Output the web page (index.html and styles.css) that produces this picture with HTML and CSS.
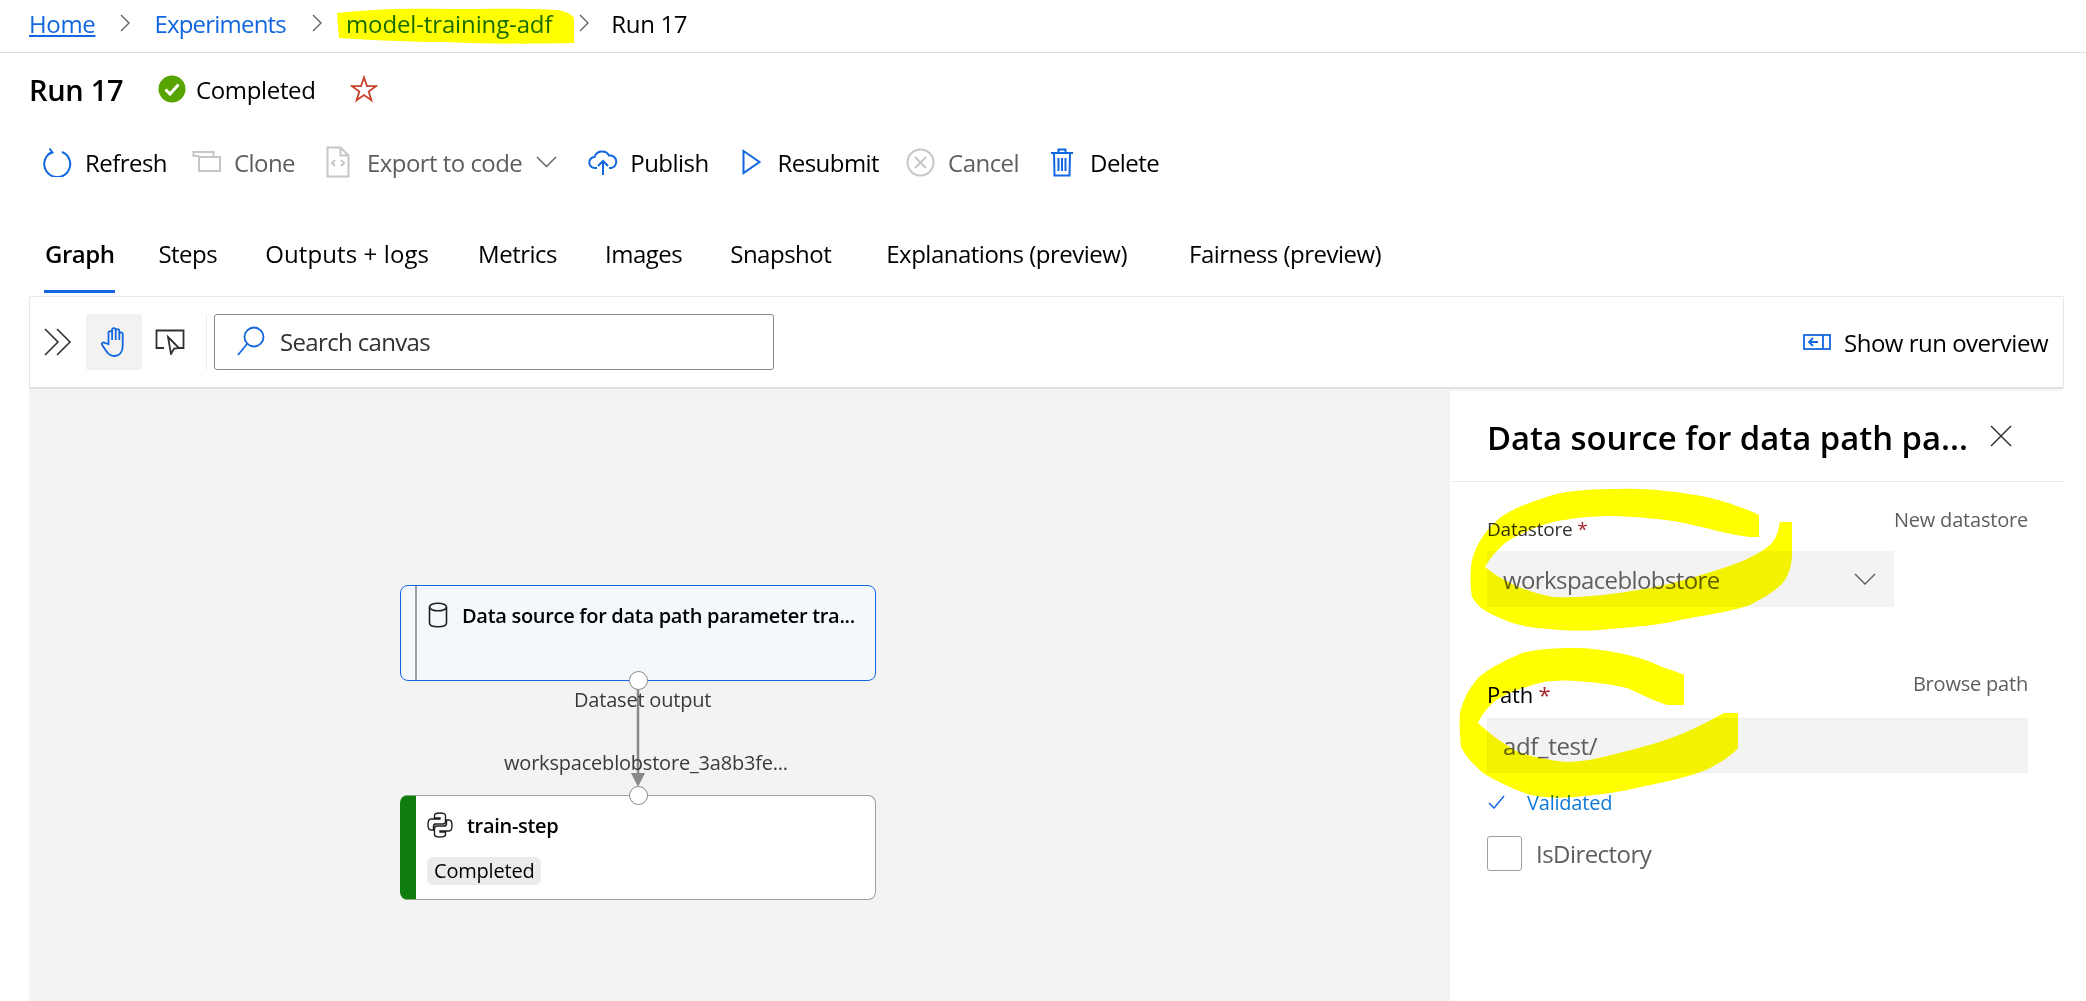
FILE: index.html
```html
<!DOCTYPE html>
<html>
<head>
  <title>Run 17 - Experiments</title>
  <meta http-equiv="Content-Type" content="text/html; charset=utf-8" />
  <link rel="stylesheet" href="styles.css">
</head>
<body>
  <nav class="breadcrumb">
    <a href="#" class="crumb-home">Home</a>
    <svg class="crumb-sep" width="12" height="20" viewBox="0 0 12 20"><path d="M2 2l8 8-8 8"/></svg>
    <a href="#" class="crumb-link">Experiments</a>
    <svg class="crumb-sep" width="12" height="20" viewBox="0 0 12 20"><path d="M2 2l8 8-8 8"/></svg>
    <a href="#" class="crumb-link crumb-model">model-training-adf</a>
    <svg class="crumb-sep" width="12" height="20" viewBox="0 0 12 20"><path d="M2 2l8 8-8 8"/></svg>
    <span class="crumb-current">Run 17</span>
  </nav>

  <header class="run-header">
    <h1 class="run-title">Run 17</h1>
    <svg class="status-icon" width="28" height="28" viewBox="0 0 28 28">
      <circle cx="14" cy="14" r="13.5" fill="#57a300"/>
      <path d="M7.5 14.5l4.5 4.5 8.5-9.5" fill="none" stroke="#fff" stroke-width="3"/>
    </svg>
    <span class="status-text">Completed</span>
    <svg class="star-icon" width="28" height="28" viewBox="0 0 28 28">
      <path d="M14 2.5l3 8.6h8.900l-7.200 5.400 2.700 8.800-7.400-5.300-7.400 5.300 2.700-8.800-7.200-5.400h8.900z" fill="none" stroke="#c8402a" stroke-width="1.800"/>
    </svg>
  </header>

  <div class="command-bar">
    <button class="cmd cmd-refresh">
      <svg width="30" height="30" viewBox="0 0 30 30" class="icon-blue"><path d="M10 5.200A13 13 0 1 0 20 5"/><path d="M7.500 1.500l3 4-4.500 1.800"/></svg>
      Refresh
    </button>
    <button class="cmd cmd-clone is-disabled">
      <svg width="30" height="22" viewBox="0 0 30 22" class="icon-gray"><path d="M7 5H1.500V1h20v5"/><rect x="7" y="6" width="21" height="14"/></svg>
      Clone
    </button>
    <button class="cmd cmd-export is-disabled">
      <svg width="24" height="32" viewBox="0 0 24 32" class="icon-gray"><path d="M1.500 1.500h13l8 8v21h-21z"/><path d="M14.500 1.500v8h8"/><path d="M9 14l-3 3 3 3M15 14l3 3-3 3" stroke-width="1.300"/></svg>
      Export to code
      <svg class="cmd-chevron" width="21" height="12" viewBox="0 0 21 12"><path d="M1 1l9.500 9.500L20 1"/></svg>
    </button>
    <button class="cmd cmd-publish">
      <svg width="30" height="28" viewBox="0 0 30 28" class="icon-blue"><path d="M9 20H7a5.500 5.500 0 0 1-.5-11A8 8 0 0 1 21 7.500 6.300 6.300 0 0 1 23 20h-2"/><path d="M15 27V13M10 18l5-5 5 5"/></svg>
      Publish
    </button>
    <button class="cmd cmd-resubmit">
      <svg width="20" height="26" viewBox="0 0 20 26" class="icon-blue"><path d="M1.500 2l16 11-16 11z"/></svg>
      Resubmit
    </button>
    <button class="cmd cmd-cancel is-disabled">
      <svg width="29" height="29" viewBox="0 0 29 29" class="icon-gray"><circle cx="14.500" cy="14.500" r="13"/><path d="M9 9l11 11M20 9L9 20"/></svg>
      Cancel
    </button>
    <button class="cmd cmd-delete">
      <svg width="22" height="29" viewBox="0 0 22 29" class="icon-blue"><path d="M0 5h22M3 5l.5 22.500h15L19 5M7.500 5V1.500h7V5M7.500 10v13M11 10v13M14.500 10v13"/></svg>
      Delete
    </button>
  </div>

  <div class="tabs">
    <a href="#" class="tab tab-active">Graph</a>
    <a href="#" class="tab tab-steps">Steps</a>
    <a href="#" class="tab tab-outputs">Outputs + logs</a>
    <a href="#" class="tab tab-metrics">Metrics</a>
    <a href="#" class="tab tab-images">Images</a>
    <a href="#" class="tab tab-snapshot">Snapshot</a>
    <a href="#" class="tab tab-explain">Explanations (preview)</a>
    <a href="#" class="tab tab-fairness">Fairness (preview)</a>
  </div>

  <section class="graph-toolbar">
    <svg class="expand-icon" width="28" height="28" viewBox="0 0 28 28"><path d="M1 1l13 13L1 27M13 1l13 13-13 13"/></svg>
    <div class="tool-btn tool-active">
      <svg width="26" height="30" viewBox="0 0 26 30" class="icon-blue thin"><path d="M7.500 17V6a1.800 1.800 0 0 1 3.600 0v7-10a1.800 1.800 0 0 1 3.600 0v10-9a1.800 1.800 0 0 1 3.600 0v9-6a1.700 1.700 0 0 1 3.400 0v12c0 6-3 10-8.500 10-4 0-6-2-8-5l-4-6c-1.200-2 1.200-3.500 2.800-2z"/></svg>
    </div>
    <svg class="select-icon" width="30" height="26" viewBox="0 0 30 26"><path d="M9 19H1.500V1.500h27V19h-5"/><path d="M13 8l11 11-5 .5-3 5.500z"/></svg>
    <div class="toolbar-divider"></div>
    <div class="search-box">
      <svg width="28" height="30" viewBox="0 0 28 30" class="icon-blue thin"><circle cx="17" cy="11" r="9.500"/><path d="M10 18L1 29"/></svg>
      <span class="search-text">Search canvas</span>
    </div>
    <div class="overview-btn">
      <svg width="28" height="16" viewBox="0 0 28 16" class="icon-blue thin"><rect x="1" y="1" width="26" height="14"/><path d="M20 1v14M15 8H6M10 4L6 8l4 4"/></svg>
      <span>Show run overview</span>
    </div>
  </section>

  <main class="graph-area">
    <div class="canvas">
      <svg class="connector" width="40" height="120" viewBox="0 0 40 120">
        <path d="M20 10v90" stroke="#8a8886" stroke-width="2.500" fill="none"/>
        <path d="M13 94h14l-7 14z" fill="#8a8886"/>
      </svg>
      <div class="node node-data">
        <svg width="20" height="26" viewBox="0 0 20 26" class="node-icon"><ellipse cx="10" cy="5" rx="8.500" ry="3.800"/><path d="M1.500 5v16c0 2.500 4 3.800 8.500 3.800s8.500-1.300 8.500-3.800V5"/></svg>
        <span class="node-title">Data source for data path parameter tra...</span>
      </div>
      <div class="node node-step">
        <svg width="26" height="26" viewBox="0 0 26 26" class="node-icon python"><path d="M7 12h9c1.500 0 2.500-1 2.500-2.500V3.500C18.500 2 16 1 13 1S7.500 2 7.500 3.500V6H13v1H4C2 7 1 9.500 1 12.500S2 18 4 18h2.500v-3.500C6.500 13 7 12 9 12"/><path d="M19 14h-9c-1.500 0-2.500 1-2.500 2.500v6c0 1.500 2.500 2.500 5.500 2.500s5.500-1 5.500-2.500V20H13v-1h9c2 0 3-2.500 3-5.500S24 8 22 8h-2.500v3.500c0 1.500-.5 2.500-2.500 2.500"/></svg>
        <span class="node-title">train-step</span>
        <span class="node-badge">Completed</span>
      </div>
      <div class="port port-out"></div>
      <div class="port port-in"></div>
      <span class="edge-label label-out">Dataset output</span>
      <span class="edge-label label-in">workspaceblobstore_3a8b3fe...</span>
    </div>

    <aside class="panel">
      <div class="panel-header">
        <h2 class="panel-title">Data source for data path pa...</h2>
        <svg class="panel-close" width="22" height="22" viewBox="0 0 22 22"><path d="M1 1l20 20M21 1L1 21"/></svg>
      </div>
      <div class="field field-datastore">
        <div class="field-head">
          <label class="field-label small">Datastore <span class="req">*</span></label>
          <a href="#" class="field-link">New datastore</a>
        </div>
        <div class="select-box">
          <span>workspaceblobstore</span>
          <svg width="22" height="14" viewBox="0 0 22 14"><path d="M1 2l10 10L21 2"/></svg>
        </div>
      </div>
      <div class="field field-path">
        <div class="field-head">
          <label class="field-label">Path <span class="req">*</span></label>
          <a href="#" class="field-link">Browse path</a>
        </div>
        <div class="input-box">adf_test/</div>
      </div>
      <div class="validated">
        <svg width="17" height="14" viewBox="0 0 17 14"><path d="M1 8l5 5L16 1"/></svg>
        <span>Validated</span>
      </div>
      <div class="check-row">
        <span class="checkbox"></span>
        <span>IsDirectory</span>
      </div>
    </aside>
  </main>

  <svg class="highlighter" width="2086" height="1001" viewBox="0 0 2086 1001">
    <path d="M337 13C370 9 410 8 446 9C490 9 530 8 558 10C568 12 574 15 574 20L574 43C530 44 490 44 446 42C410 42 370 40 339 38Z"/>
    <path d="M1759 515C1740 506 1720 500 1706 497C1675 491 1645 488 1619 489C1595 489 1570 490 1553 495C1530 502 1512 509 1501 517C1485 530 1476 545 1472 560C1470 572 1470 585 1472 597C1478 608 1488 613 1500 618C1515 625 1530 628 1549 629C1570 631 1590 631 1610 629C1635 627 1660 625 1680 620C1705 615 1730 612 1750 605C1765 597 1778 590 1785 580C1790 572 1792 562 1792 553L1792 522L1780 522C1778 532 1776 538 1772 543C1765 550 1755 555 1745 560C1725 568 1705 574 1684 580C1662 586 1640 590 1619 593C1596 596 1575 598 1553 597C1538 594 1526 590 1514 585C1504 580 1493 574 1485 567C1490 558 1497 550 1505 543C1520 533 1535 527 1553 522C1572 518 1592 516 1614 516C1640 517 1662 519 1684 523C1708 528 1730 535 1750 537L1759 537Z"/>
    <path d="M1684 675C1676 671 1670 670 1662 667C1648 660 1634 656 1619 653C1604 650 1590 648 1575 648C1555 648 1538 649 1522 653C1506 660 1491 667 1479 677C1469 688 1463 700 1460 713C1459 725 1460 736 1461 747C1466 757 1474 765 1483 773C1498 782 1514 790 1531 795C1546 798 1560 798 1575 797C1598 795 1620 792 1641 787C1664 782 1686 778 1706 770C1720 763 1731 756 1738 748L1738 713L1724 713C1711 720 1698 727 1684 733C1662 742 1640 748 1619 753C1600 758 1583 762 1566 762C1549 760 1533 757 1518 752C1502 743 1489 733 1478 723C1482 714 1488 707 1496 700C1510 692 1527 686 1544 682C1558 680 1573 680 1588 682C1602 683 1615 685 1627 688C1641 694 1654 701 1667 705L1684 705Z"/>
  </svg>
</body>
</html>
```

FILE: styles.css
```css
* {
  box-sizing: border-box;
}

body {
  font-family: "Open Sans", "Noto Sans", sans-serif;
  background-color: #fff;
  color: #000;
  margin: 0;
  padding: 0;
  width: 2086px;
  height: 1001px;
  overflow: hidden;
  position: relative;
  font-size: 24px;
  letter-spacing: -0.35px;
}

a {
  text-decoration: none;
}

svg {
  flex: none;
  display: block;
}

.icon-blue path,
.icon-blue rect,
.icon-blue circle {
  fill: none;
  stroke: #1267e0;
  stroke-width: 2;
}

.icon-blue.thin path,
.icon-blue.thin rect,
.icon-blue.thin circle {
  stroke-width: 1.8;
}

.icon-gray path,
.icon-gray rect,
.icon-gray circle {
  fill: none;
  stroke: #c8c6c4;
  stroke-width: 2;
}

/* breadcrumb */
.breadcrumb {
  height: 53px;
  border-bottom: 1px solid #e1dfdd;
  display: flex;
  align-items: center;
  padding: 0 0 6px 29px;
}

.crumb-home {
  color: #1267e0;
  text-decoration: underline;
}

.crumb-link {
  color: #1267e0;
  letter-spacing: -0.8px;
}

.crumb-model {
  color: #1a6b00;
  letter-spacing: -0.13px;
}

.crumb-sep {
  margin: 0 23px 0 24px;
}

.crumb-sep path {
  fill: none;
  stroke: #605e5c;
  stroke-width: 1.3;
}

.breadcrumb a:nth-of-type(2) + .crumb-sep {
  margin: 0 23px 0 25px;
}

.breadcrumb a:nth-of-type(3) + .crumb-sep {
  margin: 0 21px 0 26px;
}

.crumb-current {
  color: #000;
}

/* title row */
.run-header {
  height: 74px;
  display: flex;
  align-items: center;
  padding: 0 0 2px 29px;
}

.run-title {
  margin: 0;
  font-size: 29px;
  font-weight: 600;
  letter-spacing: -0.3px;
  width: 129px;
}

.status-text {
  margin-left: 10px;
}

.star-icon {
  margin-left: 34px;
}

/* commands */
.command-bar {
  height: 70px;
  display: flex;
  align-items: center;
  padding-left: 42px;
  letter-spacing: -0.55px;
}

.cmd {
  display: flex;
  align-items: center;
  gap: 13px;
  background: none;
  border: none;
  padding: 0;
  font: inherit;
  letter-spacing: inherit;
  color: #000;
}

.cmd.is-disabled {
  color: #605e5c;
}

.cmd-clone {
  margin-left: 25px;
  gap: 12px;
}

.cmd-export {
  margin-left: 31px;
  gap: 17px;
}

.cmd-chevron {
  margin-left: -3px;
}

.cmd-chevron path {
  fill: none;
  stroke: #605e5c;
  stroke-width: 1.4;
}

.cmd-publish {
  margin-left: 31px;
  gap: 12px;
}

.cmd-resubmit {
  margin-left: 33px;
  gap: 16px;
}

.cmd-cancel {
  margin-left: 27px;
  gap: 13px;
}

.cmd-delete {
  margin-left: 32px;
  gap: 17px;
}

/* tabs */
.tabs {
  height: 96px;
  display: flex;
  align-items: flex-end;
  padding-left: 44px;
  padding-bottom: 3px;
  letter-spacing: -0.5px;
}

.tab {
  color: #000;
  height: 71px;
  padding: 0 1px 0;
  line-height: 64px;
  border-bottom: 3px solid transparent;
  margin-bottom: -3px;
}

.tab-active {
  font-weight: 600;
  border-bottom-color: #1267e0;
}

.tab-steps {
  margin-left: 42px;
}

.tab-outputs {
  margin-left: 46px;
  letter-spacing: 0.1px;
}

.tab-metrics {
  margin-left: 47px;
}

.tab-images {
  margin-left: 46px;
}

.tab-snapshot {
  margin-left: 46px;
}

.tab-explain {
  margin-left: 53px;
}

.tab-fairness {
  margin-left: 60px;
}

/* canvas toolbar */
.graph-toolbar {
  margin: 3px 0 0 29px;
  width: 2035px;
  height: 93px;
  border: 1px solid #e8e8e8;
  border-bottom: 2px solid #e1e1e1;
  border-radius: 2px;
  display: flex;
  align-items: center;
  padding: 0 15px 0 14px;
  background-color: #fff;
}

.expand-icon path {
  fill: none;
  stroke: #323130;
  stroke-width: 1.6;
}

.tool-btn {
  width: 56px;
  height: 56px;
  margin-left: 14px;
  display: flex;
  align-items: center;
  justify-content: center;
  border-radius: 2px;
}

.tool-active {
  background-color: #f3f2f1;
}

.select-icon {
  margin-left: 13px;
}

.select-icon path {
  fill: none;
  stroke: #323130;
  stroke-width: 1.8;
}

.toolbar-divider {
  width: 1px;
  height: 56px;
  background-color: #edebe9;
  margin-left: 21px;
}

.search-box {
  width: 560px;
  height: 56px;
  margin-left: 7px;
  border: 1px solid #8a8886;
  border-radius: 3px;
  display: flex;
  align-items: center;
  padding: 0 0 2px 22px;
  gap: 15px;
  letter-spacing: -0.65px;
}

.search-text {
  color: #323130;
}

.overview-btn {
  margin-left: auto;
  display: flex;
  align-items: center;
  gap: 13px;
  letter-spacing: -0.5px;
}

/* graph + side panel */
.graph-area {
  margin-left: 29px;
  width: 2035px;
  height: 612px;
  display: flex;
}

.canvas {
  flex: 1;
  position: relative;
  background-color: #f3f3f3;
}

.connector {
  position: absolute;
  left: 589px;
  top: 290px;
}

.node {
  position: absolute;
  left: 371px;
  width: 476px;
  border-radius: 8px;
  overflow: hidden;
}

.node-data {
  top: 196px;
  height: 96px;
  border: 1.5px solid #1267e0;
  background-color: #f3f8fd;
  display: flex;
  align-items: flex-start;
  padding: 16px 0 0 27px;
  gap: 14px;
}

.node-data::before {
  content: "";
  position: absolute;
  left: 14px;
  top: 0;
  bottom: 0;
  width: 1.5px;
  background-color: #a19f9d;
}

.node-icon ellipse,
.node-icon path {
  fill: none;
  stroke: #201f1e;
  stroke-width: 1.6;
}

.node-icon.python path {
  stroke-width: 1.4;
}

.node-title {
  font-size: 20px;
  font-weight: 600;
  letter-spacing: -0.3px;
  white-space: nowrap;
}

.node-step {
  top: 406px;
  height: 105px;
  border: 1.5px solid #a19f9d;
  background-color: #fff;
  border-left: 16px solid #107c10;
  padding: 16px 0 0 11px;
  display: grid;
  grid-template-columns: 26px auto;
  grid-template-rows: 26px auto;
  column-gap: 14px;
  row-gap: 19px;
  align-content: start;
  justify-content: start;
  align-items: center;
}

.node-badge {
  grid-column: 1 / 3;
  justify-self: start;
  background-color: #ebebeb;
  border-radius: 6px;
  font-size: 20px;
  letter-spacing: -0.2px;
  height: 28px;
  line-height: 27px;
  padding: 0 7px;
}

.port {
  position: absolute;
  left: 600px;
  width: 19px;
  height: 19px;
  border-radius: 50%;
  border: 1.500px solid #8a8886;
  background-color: #fff;
}

.port-out {
  top: 282px;
}

.port-in {
  top: 397px;
}

.edge-label {
  position: absolute;
  font-size: 20px;
  letter-spacing: -0.2px;
  color: #3b3a39;
  white-space: nowrap;
  line-height: 26px;
}

.label-out {
  left: 545px;
  top: 298px;
}

.label-in {
  left: 475px;
  top: 361px;
}

.panel {
  width: 614px;
  margin-top: 2px;
  background-color: #fff;
  box-shadow: -3px 0 4px rgba(0, 0, 0, 0.12);
  padding-left: 2px;
}

.panel-header {
  height: 91px;
  border-bottom: 1px solid #edebe9;
  display: flex;
  align-items: center;
  padding: 0 0 0 35px;
}

.panel-title {
  margin: 3px 0 0;
  font-size: 32.8px;
  font-weight: 600;
  letter-spacing: 0;
  white-space: nowrap;
  width: 503px;
}

.panel-close path {
  fill: none;
  stroke: #323130;
  stroke-width: 1.5;
}

.field {
  padding-left: 35px;
  width: 576px;
}

.field-head {
  display: flex;
  justify-content: space-between;
  align-items: flex-start;
  position: relative;
  height: 44px;
}

.field-datastore {
  padding-top: 25px;
}

.field-path {
  padding-top: 64px;
}

.field-path .field-head {
  height: 47px;
}

.field-label {
  padding-top: 9px;
  font-size: 19px;
  letter-spacing: -0.2px;
  color: #323130;
  line-height: 26px;
}

.field-path .field-label {
  font-size: 22px;
  color: #000;
  line-height: 30px;
  padding-top: 8px;
}

.req {
  color: #a4262c;
}

.field-link {
  font-size: 20px;
  letter-spacing: -0.2px;
  color: #605e5c;
  line-height: 26px;
}

.select-box {
  width: 407px;
  height: 56px;
  background-color: #f3f3f3;
  display: flex;
  align-items: center;
  justify-content: space-between;
  padding: 0 18px 0 16px;
  color: #605e5c;
  letter-spacing: -0.6px;
}

.select-box svg path {
  fill: none;
  stroke: #605e5c;
  stroke-width: 1.4;
}

.input-box {
  height: 55px;
  background-color: #f3f3f3;
  border: 1px solid #f0f0f0;
  padding-left: 15px;
  line-height: 53px;
  color: #605e5c;
}

.validated {
  display: flex;
  align-items: center;
  gap: 22px;
  margin: 16px 0 0 36px;
  font-size: 20px;
  letter-spacing: -0.2px;
  color: #0f78d4;
  height: 26px;
}

.validated svg path {
  fill: none;
  stroke: #1267e0;
  stroke-width: 1.5;
}

.check-row {
  display: flex;
  align-items: center;
  gap: 14px;
  margin: 21px 0 0 35px;
  color: #605e5c;
  letter-spacing: -0.55px;
}

.checkbox {
  width: 35px;
  height: 35px;
  border: 1px solid #a19f9d;
  border-radius: 3px;
  background-color: #fff;
}

/* marker scribbles drawn over the screenshot */
.highlighter {
  position: absolute;
  left: 0;
  top: 0;
  mix-blend-mode: multiply;
  pointer-events: none;
}

.highlighter path {
  fill: #ffff00;
}
```
